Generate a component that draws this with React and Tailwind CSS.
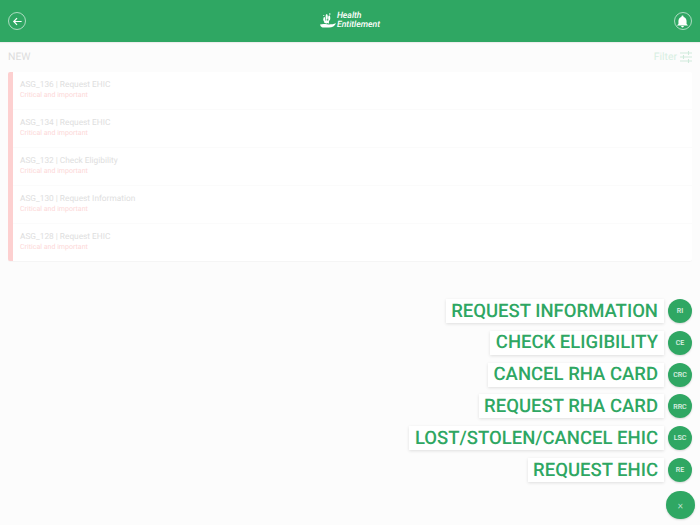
import React from "react";

const rows = [
  ["ASG_136 | Request EHIC"],
  ["ASG_134 | Request EHIC"],
  ["ASG_132 | Check Eligibility"],
  ["ASG_130 | Request Information"],
  ["ASG_128 | Request EHIC"],
];

const actions = [
  ["REQUEST INFORMATION", "RI"],
  ["CHECK ELIGIBILITY", "CE"],
  ["CANCEL RHA CARD", "CRC"],
  ["REQUEST RHA CARD", "RRC"],
  ["LOST/STOLEN/CANCEL EHIC", "LSC"],
  ["REQUEST EHIC", "RE"],
];

export default function App() {
  return (
    <div className="relative h-[525px] w-[700px] overflow-hidden bg-[#fcfcfc] font-['Roboto',sans-serif] [text-rendering:geometricPrecision]">
      <header className="flex h-[42px] items-center justify-between bg-[#2fa763] pl-2 pr-2 shadow-[0_1px_1px_rgba(0,0,0,0.06)]">
        <button className="flex h-[18px] w-[18px] items-center justify-center rounded-full border border-white/60">
          <svg width="11" height="11" viewBox="0 0 12 12" fill="none" stroke="white" strokeWidth="1.300">
            <path d="M10.500 6H2M5.500 2.400 1.900 6l3.600 3.600" />
          </svg>
        </button>
        <div className="flex items-center gap-[1px]">
          <svg width="16" height="16" viewBox="0 0 16 16" fill="white">
            <path d="M0 11.500c2-.6 3.500-.7 5.500-.4l3 .3c2.500.1 4.800-.4 7.500-1.200-1 2.700-3.800 4.300-7 4.300-2.800 0-4.800.3-6.500-.1C1.300 14.100.4 13 0 11.500z" />
            <ellipse cx="4.300" cy="6.200" rx="1" ry="2.300" />
            <ellipse cx="6.700" cy="4" rx="1.100" ry="2.900" />
            <ellipse cx="9.200" cy="5" rx="1.100" ry="2.700" />
            <ellipse cx="6.500" cy="8.800" rx="2.600" ry="1.500" />
            <path d="M5.800 6.500h.8v4h-.8zM8.200 7h.8v3.500h-.8z" />
            <circle cx="9.800" cy="1" r=".8" />
            <circle cx="3.800" cy="2.500" r=".6" />
          </svg>
          <div className="text-[8.700px] font-medium italic leading-[9px] text-white">
            <div>Health</div>
            <div>Entitlement</div>
          </div>
        </div>
        <button className="flex h-[18px] w-[18px] items-center justify-center rounded-full border border-white/60">
          <svg width="13" height="13" viewBox="0 0 24 24" fill="white">
            <path d="M12 23c1.400 0 2.500-1.100 2.500-2.500h-5C9.500 21.900 10.600 23 12 23zM19.500 16.500V11c0-3.700-2-6.700-5.500-7.500V3a2 2 0 0 0-4 0v.500C6.500 4.300 4.500 7.300 4.500 11v5.500L2 19v.5h20V19z" />
          </svg>
        </button>
      </header>

      <div className="flex h-[30px] items-center justify-between pl-2 pr-2">
        <span className="text-[10.400px] text-[#dcdcdc]">NEW</span>
        <div className="flex items-center gap-[3px]">
          <span className="text-[10.400px] text-[#d8efe2]">Filter</span>
          <svg width="12" height="12" viewBox="0 0 12 12" stroke="#cfeadb" strokeWidth="1.100" fill="none">
            <path d="M0 2h12M0 6h12M0 10h12M8.500 0v4M3.500 4v4M8.500 8v4" />
          </svg>
        </div>
      </div>

      <div className="mx-2 overflow-hidden rounded-[2px] border-l-[5px] border-[#fdd0d0] bg-white shadow-[0_1px_1px_rgba(0,0,0,0.03)]">
        {rows.map(([title], i) => (
          <div key={i} className={`pl-[7px] pt-[8px] ${i < 4 ? "h-[38px] border-b border-[#fbfbfb]" : "h-[37px]"}`}>
            <div className="text-[8.300px] leading-[10px] text-[#dedede]">{title}</div>
            <div className="text-[7.060px] leading-[9px] text-[#fdd8d8]">Critical and important</div>
          </div>
        ))}
      </div>

      <div className="absolute right-2 top-[299px] flex flex-col items-end gap-[7.800px]">
        {actions.map(([label, code]) => (
          <div key={code} className="flex items-center gap-[4.500px]">
            <div className="flex h-6 items-center bg-white px-[5.500px] pt-[1px] text-[18.500px] font-medium text-[#2fa763] shadow-[0_1px_3px_rgba(0,0,0,0.12)]">
              {label}
            </div>
            <div className="flex h-6 w-6 items-center justify-center rounded-full bg-[#2fa763] pt-[1px] text-[7px] font-medium text-white/85 shadow-[0_1px_2px_rgba(0,0,0,0.15)]">
              {code}
            </div>
          </div>
        ))}
      </div>

      <button className="absolute bottom-[6px] right-[5.500px] flex h-[28.500px] w-[28.500px] items-center justify-center rounded-full bg-[#2fa763] pt-[1px] text-[10px] font-light text-white/85 shadow-[0_1px_2px_rgba(0,0,0,0.15)]">
        ×
      </button>
    </div>
  );
}
